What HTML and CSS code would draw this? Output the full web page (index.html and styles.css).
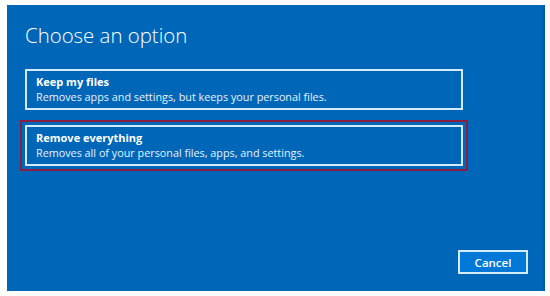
FILE: index.html
```html
<!DOCTYPE html>
<html lang="en">
<head>
    <meta charset="UTF-8">
    <title>Choose an option</title>
    <link rel="stylesheet" href="styles.css">
</head>
<body>
    <!-- Recovery screen -->
    <div class="screen">
        <h1 class="screen-title">Choose an option</h1>

        <div class="options">
            <button class="option">
                <span class="option-name">Keep my files</span>
                <span class="option-desc">Removes apps and settings, but keeps your personal files.</span>
            </button>
            <button class="option option--focused">
                <span class="option-name">Remove everything</span>
                <span class="option-desc">Removes all of your personal files, apps, and settings.</span>
            </button>
        </div>

        <div class="actions">
            <button class="btn-cancel">Cancel</button>
        </div>
    </div>
</body>
</html>
```

FILE: styles.css
```css
/* Reset and base styles */
*,
*::before,
*::after {
    margin: 0;
    padding: 0;
    box-sizing: border-box;
}

body {
    font-family: 'Open Sans', 'Noto Sans', 'Liberation Sans', sans-serif;
    background: #ffffff;
    padding: 5px 5px 5px 7px;
    height: 296px;
    overflow: hidden;
}

/* Blue recovery panel */
.screen {
    height: 286px;
    width: 538px;
    background: #0067b8;
    border-right: 2px solid #005a9e;
    color: #ffffff;
    display: flex;
    flex-direction: column;
    padding: 16px 0 0 18px;
}

.screen-title {
    font-size: 20.4px;
    font-weight: 300;
    line-height: 28px;
}

/* Option tiles */
.options {
    display: flex;
    flex-direction: column;
    gap: 15px;
    margin-top: 20px;
}

.option {
    width: 438px;
    height: 41px;
    border: 2px solid #d3ebfc;
    background: transparent;
    color: #ffffff;
    font-family: inherit;
    text-align: left;
    display: flex;
    flex-direction: column;
    justify-content: center;
    padding: 0 0 1px 9px;
}

.option--focused {
    outline: 2px solid #8c1d42;
    outline-offset: 3px;
}

.option-name {
    font-size: 11px;
    font-weight: 700;
    line-height: 15px;
}

.option-desc {
    font-size: 10.8px;
    line-height: 15px;
    color: #e8f2fb;
}

/* Bottom action */
.actions {
    margin-top: auto;
    display: flex;
    justify-content: flex-end;
    padding: 0 15px 17px 0;
}

.btn-cancel {
    width: 70px;
    height: 24px;
    background: #0078d7;
    border: 2px solid #d3ebfc;
    color: #ffffff;
    font-family: inherit;
    font-size: 11.5px;
    font-weight: 600;
}
```
